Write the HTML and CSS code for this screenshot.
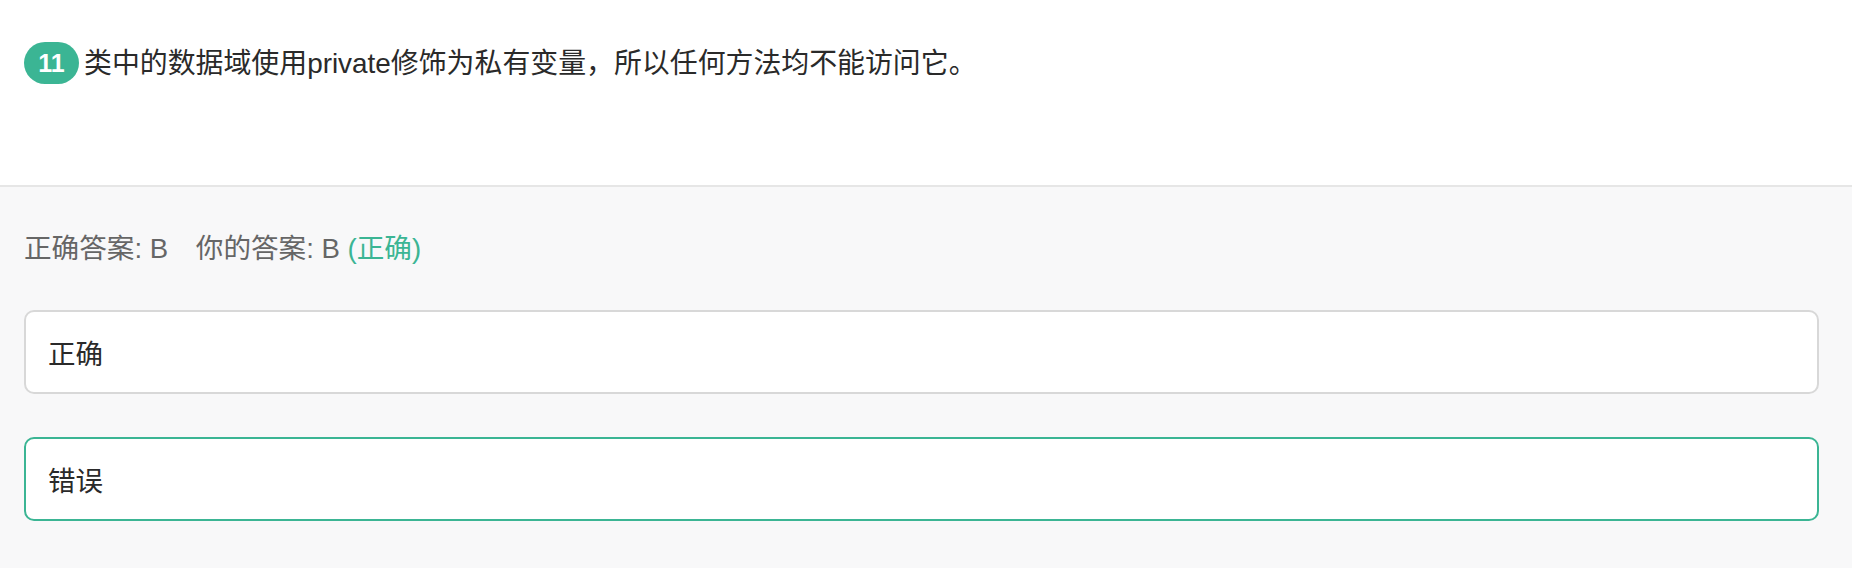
FILE: index.html
```html
<!DOCTYPE html>
<html lang="zh-CN">
<head>
<meta charset="utf-8">
<link rel="stylesheet" href="styles.css">
</head>
<body>
<div class="question">
  <span class="badge">11</span>
  <span class="qtext">类中的数据域使用private修饰为私有变量，所以任何方法均不能访问它。</span>
</div>
<div class="answers">
  <div class="result">
    <span>正确答案: B</span>
    <span class="yours">你的答案: B <span class="ok">(正确)</span></span>
  </div>
  <div class="options">
    <div class="option">正确</div>
    <div class="option selected">错误</div>
  </div>
</div>
</body>
</html>
```

FILE: styles.css
```css
html, body {
  margin: 0;
  padding: 0;
  height: 100%;
  background: #f8f8f9;
  font-family: "Liberation Sans", "Noto Sans CJK SC", sans-serif;
}
.question {
  background: #ffffff;
  height: 187px;
  box-sizing: border-box;
  padding: 42px 33px 0 24px;
  display: flex;
  align-items: flex-start;
  border-bottom: 2px solid #e6e6e6;
}
.badge {
  display: inline-block;
  width: 55px;
  height: 42px;
  line-height: 42px;
  border-radius: 21px;
  background: #3bb594;
  color: #ffffff;
  font-size: 25px;
  font-weight: bold;
  text-align: center;
  flex: none;
}
.qtext {
  margin-left: 5px;
  font-size: 27.9px;
  line-height: 43px;
  color: #2a2a2a;
}
.answers {
  padding: 42px 33px 0 24px;
}
.result {
  font-size: 27.6px;
  line-height: 40px;
  color: #666666;
}
.yours {
  margin-left: 20px;
}
.ok {
  color: #3bb594;
}
.options {
  margin-top: 41px;
  display: flex;
  flex-direction: column;
  gap: 43px;
}
.option {
  height: 84px;
  box-sizing: border-box;
  border: 2px solid #d8d8d8;
  border-radius: 10px;
  background: #ffffff;
  padding: 0 22px;
  display: flex;
  align-items: center;
  font-size: 27.5px;
  color: #2a2a2a;
}
.option.selected {
  border-color: #3bb594;
}
```
